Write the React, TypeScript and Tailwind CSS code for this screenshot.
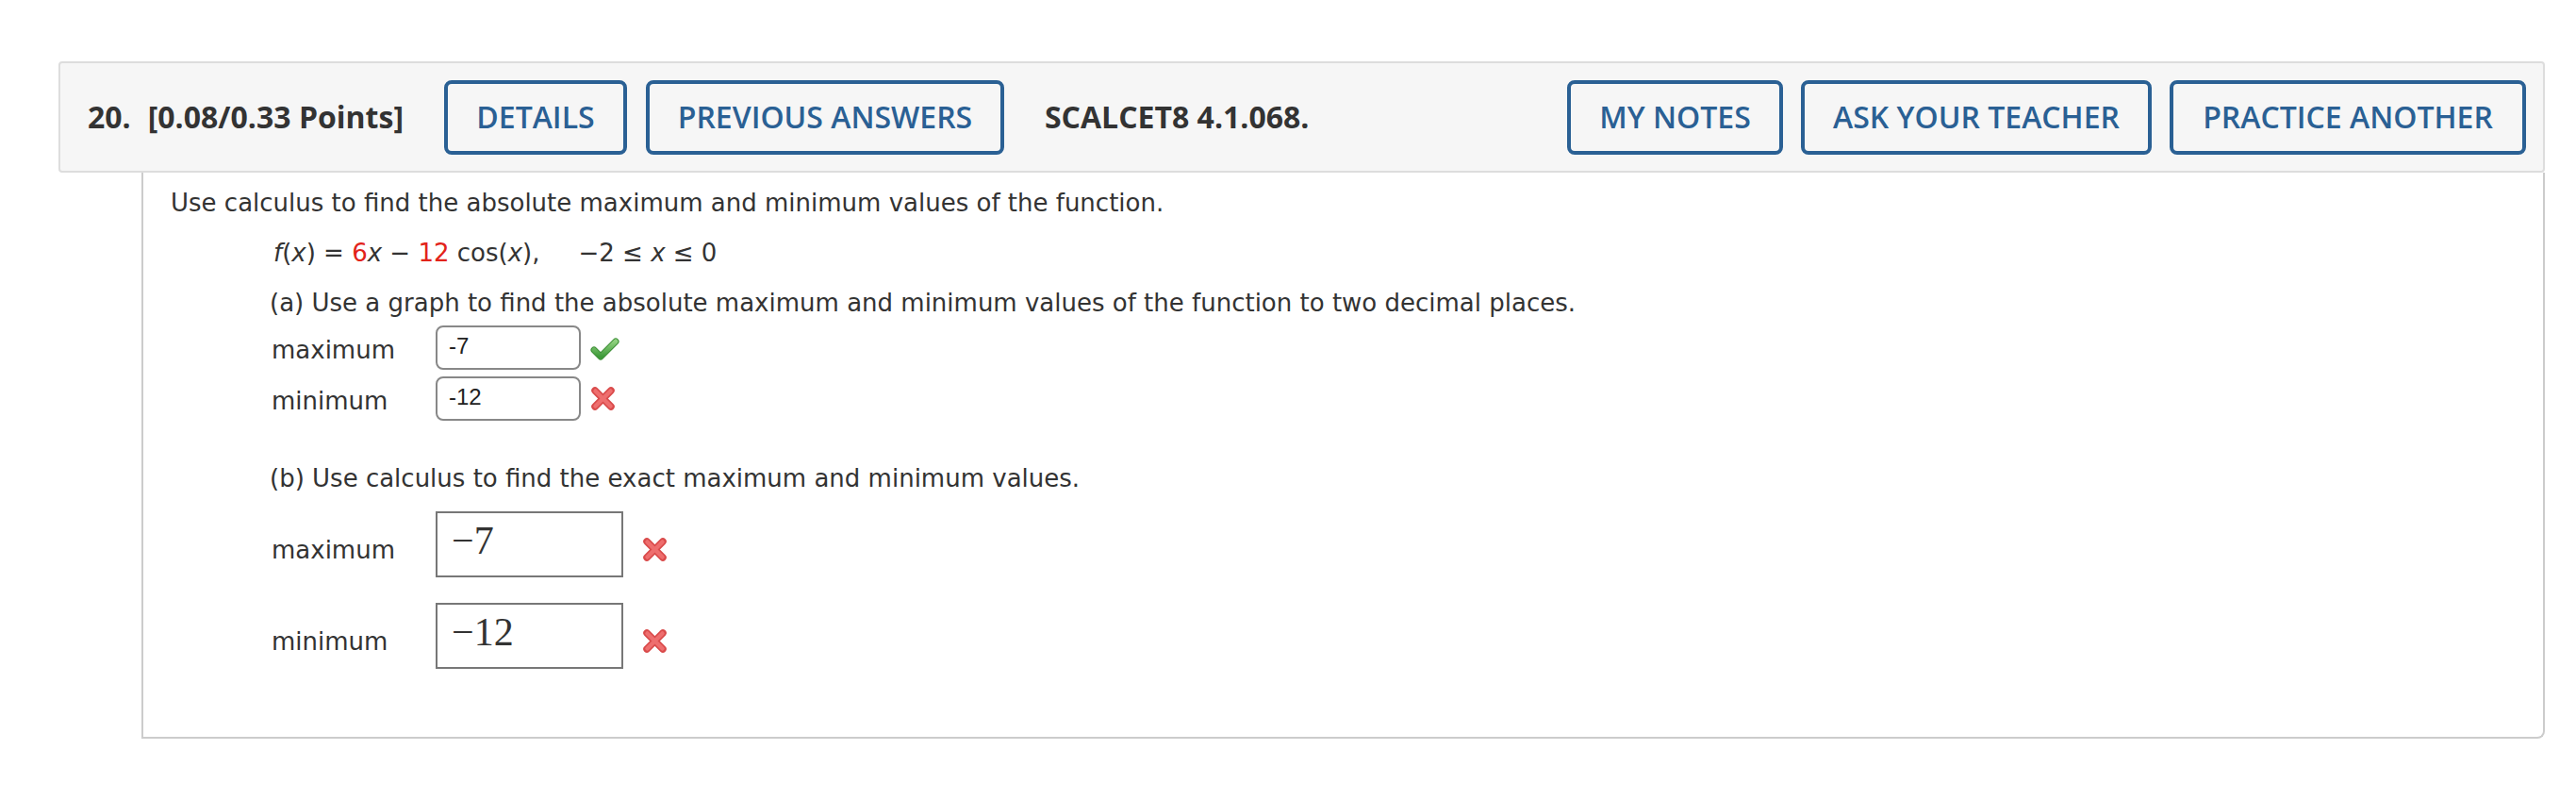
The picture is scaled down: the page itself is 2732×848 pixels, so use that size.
import React from "react";

const sans = { fontFamily: '"DejaVu Sans", Verdana, sans-serif' };

function Check() {
  return (
    <svg width="31" height="25" viewBox="0 0 31 25" className="block">
      <defs>
        <linearGradient id="cg" x1="0" y1="0" x2="0" y2="1">
          <stop offset="0" stopColor="#8fd07e" />
          <stop offset="1" stopColor="#3e9a3a" />
        </linearGradient>
      </defs>
      <polyline points="4,13 11,20 27,4" fill="none" stroke="#3d8f36" strokeWidth="7" strokeLinecap="round" strokeLinejoin="round" />
      <polyline points="4,13 11,20 27,4" fill="none" stroke="url(#cg)" strokeWidth="5" strokeLinecap="round" strokeLinejoin="round" />
    </svg>
  );
}

function Cross() {
  return (
    <svg width="27" height="27" viewBox="0 0 27 27" className="block">
      <g strokeLinecap="round">
        <line x1="5" y1="5" x2="22" y2="22" stroke="#d94a4a" strokeWidth="7.5" />
        <line x1="22" y1="5" x2="5" y2="22" stroke="#d94a4a" strokeWidth="7.5" />
        <line x1="5.5" y1="5.5" x2="21.5" y2="21.5" stroke="#ee6e6e" strokeWidth="4.5" />
        <line x1="21.5" y1="5.5" x2="5.5" y2="21.5" stroke="#ee6e6e" strokeWidth="4.5" />
      </g>
    </svg>
  );
}

function Btn({ w, children }: { w: string; children: React.ReactNode }) {
  return (
    <div
      className={`${w} h-[79px] shrink-0 border-[4px] border-[#2a6094] rounded-[8px] flex items-center justify-center text-[32px] font-semibold text-[#2a6094] leading-none`}
      style={{ fontFamily: '"Open Sans", sans-serif' }}
    >
      {children}
    </div>
  );
}

function AInput({ value, ok }: { value: string; ok: boolean }) {
  return (
    <div className="flex items-start">
      <div className="w-[174px] ml-[2px] mt-[10px] text-[26px] leading-[32px] text-[#333]" style={sans}>
        {value === "-7" ? "maximum" : "minimum"}
      </div>
      <div
        className="w-[154px] h-[47px] border-2 border-[#888] rounded-[8px] pl-[12px] pt-[8px] text-[24px] leading-[24px] text-[#222]"
        style={{ fontFamily: '"Liberation Sans", Arial, sans-serif' }}
      >
        {value}
      </div>
      <div className={ok ? "ml-[10px] mt-[13px]" : "ml-[10px] mt-[10px]"}>{ok ? <Check /> : <Cross />}</div>
    </div>
  );
}

function BInput({ label, value }: { label: string; value: string }) {
  return (
    <div className="flex items-start">
      <div className="w-[174px] ml-[2px] mt-[25px] text-[26px] leading-[32px] text-[#333]" style={sans}>
        {label}
      </div>
      <div
        className="w-[199px] h-[70px] border-2 border-[#777] pl-[15px] pt-[8px] text-[42px] leading-[42px] text-[#333]"
        style={{ fontFamily: '"Liberation Serif", "Times New Roman", serif' }}
      >
        {value}
      </div>
      <div className="ml-[20px] mt-[27px]">
        <Cross />
      </div>
    </div>
  );
}

export default function App() {
  return (
    <div className="w-[2732px] h-[848px] bg-white overflow-hidden">
      <div className="ml-[62px] mt-[65px] w-[2637px]">
        <div
          className="h-[118px] border-2 border-[#dddddd] bg-[#f6f6f6] rounded-[4px] flex items-center pl-[29px] pr-[18px] text-[#333] text-[32px] font-bold leading-none"
          style={{ fontFamily: '"Open Sans", sans-serif' }}
        >
          <span>20.</span>
          <span className="ml-[18px]">[0.08/0.33 Points]</span>
          <div className="ml-[43px] flex gap-[20px]">
            <Btn w="w-[194px]">DETAILS</Btn>
            <Btn w="w-[380px]">PREVIOUS ANSWERS</Btn>
          </div>
          <span className="ml-[43px]">SCALCET8 4.1.068.</span>
          <div className="flex-1" />
          <div className="flex gap-[19px]">
            <Btn w="w-[229px]">MY NOTES</Btn>
            <Btn w="w-[372px]">ASK YOUR TEACHER</Btn>
            <Btn w="w-[378px]">PRACTICE ANOTHER</Btn>
          </div>
        </div>
        <div className="ml-[88px] h-[600px] border-l-2 border-r-2 border-b-2 border-[#cccccc] rounded-br-[8px] pl-[29px] pt-[16px] text-[26px] leading-[32px] text-[#333]" style={sans}>
          <div>Use calculus to find the absolute maximum and minimum values of the function.</div>
          <div className="pl-[105px]">
            <div className="mt-[21px] pl-[4px]">
              <i>f</i>(<i>x</i>) = <span className="text-[#e2231a]">6</span>
              <i>x</i> − <span className="text-[#e2231a]">12</span> cos(<i>x</i>),
              <span className="inline-block w-[41px]" />
              −2 ≤ <i>x</i> ≤ 0
            </div>
            <div className="mt-[21px]">(a) Use a graph to find the absolute maximum and minimum values of the function to two decimal places.</div>
            <div className="mt-[8px] flex flex-col gap-[7px]">
              <AInput value="-7" ok={true} />
              <AInput value="-12" ok={false} />
            </div>
            <div className="mt-[45px]">(b) Use calculus to find the exact maximum and minimum values.</div>
            <div className="mt-[19px] flex flex-col gap-[27px]">
              <BInput label="maximum" value="−7" />
              <BInput label="minimum" value="−12" />
            </div>
          </div>
        </div>
      </div>
    </div>
  );
}
